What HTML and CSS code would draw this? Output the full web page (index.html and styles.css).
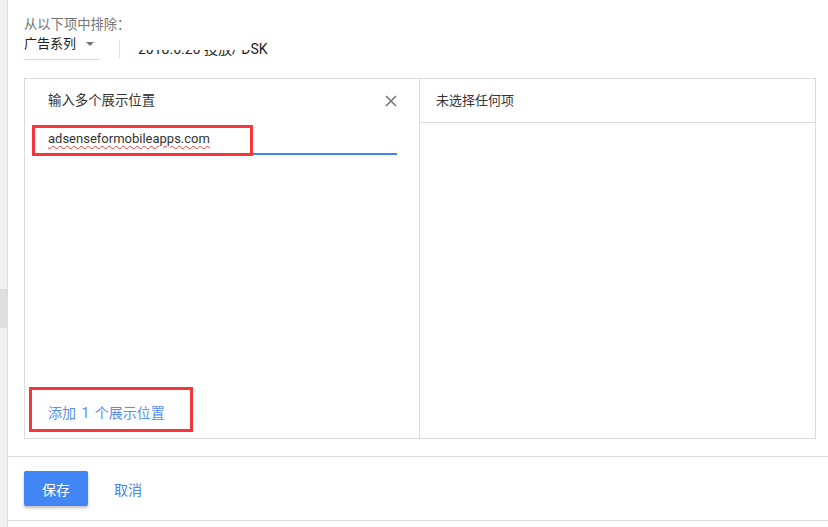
FILE: index.html
```html
<!DOCTYPE html>
<html lang="zh-CN">
<head>
<meta charset="utf-8">
<link rel="stylesheet" href="styles.css">
</head>
<body>
<div class="rail"><div class="thumb"></div></div>
<div class="main">
  <div class="content">
    <div class="label">从以下项中排除：</div>
    <div class="picker-row">
      <div class="dropdown"><span>广告系列</span><span class="caret"></span></div>
      <div class="vdiv"></div>
      <div class="crumb"><span class="clipped">2018.6.26 投放/ D</span><span>SK</span></div>
    </div>
    <div class="box">
      <div class="panel left">
        <div class="head">
          <span>输入多个展示位置</span>
          <svg class="close" width="12" height="12" viewBox="0 0 12 12"><path d="M1 1L11 11M11 1L1 11" stroke="#757575" stroke-width="1.6" fill="none"/></svg>
        </div>
        <div class="input">
          <span class="typed">adsenseformobileapps.com</span>
          <div class="mark mark-input"></div>
        </div>
        <div class="add">
          <span class="link">添加 1 个展示位置</span>
          <div class="mark mark-add"></div>
        </div>
      </div>
      <div class="panel right">
        <div class="head bordered">未选择任何项</div>
      </div>
    </div>
  </div>
  <div class="actions">
    <button class="save">保存</button>
    <span class="cancel">取消</span>
  </div>
</div>
</body>
</html>
```
FILE: styles.css
```css
html, body { margin: 0; padding: 0; background: #fff; }
body {
  display: flex;
  width: 828px;
  height: 527px;
  overflow: hidden;
  font-family: Roboto, "Noto Sans CJK SC", sans-serif;
  font-size: 13px;
  color: #333;
}
.rail {
  width: 7px;
  background: #f2f2f2;
  border-right: 1px solid #dcdcdc;
  padding-top: 289px;
  box-sizing: content-box;
  flex: none;
}
.thumb { height: 39px; background: #dedede; }
.main { flex: 1; display: flex; flex-direction: column; }
.content { padding: 16px 12px 0 16px; }
.label { line-height: 18px; color: #757575; font-size: 13.3px; }
.picker-row { display: flex; align-items: flex-start; height: 27px; }
.dropdown {
  width: 76px;
  height: 26px;
  box-sizing: border-box;
  border-bottom: 1px solid #dcdcdc;
  line-height: 20px;
  font-size: 13px;
  color: #212121;
  display: flex;
  align-items: flex-start;
}
.caret {
  margin: 8px 0 0 10px;
  width: 0; height: 0;
  border-left: 4px solid transparent;
  border-right: 4px solid transparent;
  border-top: 4px solid #757575;
}
.vdiv { width: 1px; height: 18px; background: #e0e0e0; margin: 6px 0 0 19px; }
.crumb { margin-left: 18px; line-height: 20px; margin-top: 5px; font-size: 14px; color: #222; white-space: nowrap; }
.clipped { clip-path: inset(55% 0 0 0); display: inline-block; }
.box {
  margin-top: 17px;
  height: 361px;
  border: 1px solid #dcdcdc;
  display: flex;
  box-sizing: border-box;
}
.panel { display: flex; flex-direction: column; }
.left { width: 394px; border-right: 1px solid #dcdcdc; }
.right { flex: 1; }
.head {
  height: 43px;
  line-height: 43px;
  padding-left: 23px;
  font-size: 13.4px;
  color: #333;
  display: flex;
  align-items: center;
}
.head.bordered { padding-left: 16px; border-bottom: 1px solid #dcdcdc; font-size: 13px; }
.close { margin-left: auto; margin-right: 22px; }
.input {
  position: relative;
  margin: 0 22px 0 8px;
  height: 33px;
  border-bottom: 2px solid #4285f4;
  box-sizing: border-box;
  padding: 7px 0 0 15px;
  line-height: 20px;
}
.typed {
  font-size: 13px;
  color: #333;
  text-decoration: underline wavy #e53935;
  text-decoration-thickness: 1px;
  text-underline-offset: 2px;
}
.mark { position: absolute; border: 3px solid #f5363b; box-sizing: border-box; }
.mark-input { left: -1px; top: 3px; width: 221px; height: 31px; }
.add { position: relative; margin-top: auto; padding: 0 0 14px 23px; line-height: 20px; }
.link { color: #5a8ef2; font-size: 14px; word-spacing: 2px; }
.mark-add { left: 4px; top: -16px; width: 164px; height: 45px; }
.actions {
  margin-top: 17px;
  border-top: 1px solid #dcdcdc;
  border-bottom: 1px solid #dcdcdc;
  padding: 14px 0 14px 16px;
  display: flex;
  align-items: center;
}
.save {
  width: 64px;
  height: 35px;
  background: #4285f4;
  color: #fff;
  border: none;
  border-radius: 2px;
  font-family: inherit;
  font-size: 14px;
  box-shadow: 0 2px 3px rgba(0,0,0,0.25);
  padding: 0;
}
.cancel { margin-left: 26px; color: #4285f4; font-size: 14px; }
```
